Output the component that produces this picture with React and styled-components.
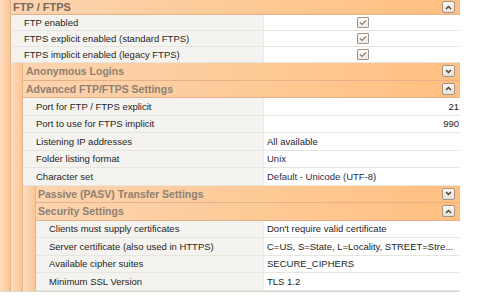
import React from 'react';
import styled, { createGlobalStyle } from 'styled-components';

const Global = createGlobalStyle`
  html, body { margin: 0; padding: 0; background: #fff; }
  body { font-family: "Liberation Sans", Arial, sans-serif; }
`;

const Grid = styled.div`
  width: 460px;
  border-bottom: 1px solid #d9d6cf;
`;

const Category = styled.div`
  display: flex;
`;

const Band = styled.div`
  flex: none;
  box-sizing: border-box;
  width: ${p => p.$w}px;
  background: linear-gradient(to right, #fddcc0, #fbc693);
  border-right: 1px solid #e8b48a;
`;

const Body = styled.div`
  flex: 1;
  min-width: 0;
  display: flex;
  flex-direction: column;
`;

const Header = styled.div`
  box-sizing: border-box;
  height: ${p => p.$h}px;
  display: flex;
  align-items: center;
  justify-content: space-between;
  padding: 0 5px 0 ${p => p.$pad}px;
  background: linear-gradient(to right, #fcd4b0, #fdca97 50%, #ffbf7f);
  border-bottom: 1px solid #e6b088;
  font-weight: bold;
  font-size: ${p => p.$fs}px;
  color: ${p => p.$color};
  white-space: nowrap;
`;

const Toggle = styled.div`
  box-sizing: border-box;
  width: 13px;
  height: 12px;
  flex: none;
  border: 1px solid #a3948a;
  border-radius: 2px;
  background: linear-gradient(#fbf8f4, #e8e0d5);
  display: flex;
  align-items: center;
  justify-content: center;
`;

const Row = styled.div`
  box-sizing: border-box;
  display: flex;
  height: ${p => p.$h}px;
  border-bottom: 1px solid #e7e5df;
`;

const Name = styled.div`
  flex: 1;
  min-width: 0;
  background: #f4f3f0;
  padding-left: 13px;
  display: flex;
  align-items: center;
  font-size: 9.5px;
  color: #1e1e1e;
  white-space: nowrap;
  overflow: hidden;
`;

const Value = styled.div`
  box-sizing: border-box;
  flex: none;
  width: 197px;
  background: #fff;
  border-left: 1px solid #eceae5;
  display: flex;
  align-items: center;
  justify-content: ${p => (p.$align === 'right' ? 'flex-end' : p.$align === 'center' ? 'center' : 'flex-start')};
  padding: 0 1px 0 3px;
  font-size: 9.5px;
  color: ${p => p.$color || '#1e1e1e'};
  white-space: nowrap;
  overflow: hidden;
`;

const Check = styled.div`
  box-sizing: border-box;
  width: 12px;
  height: 11px;
  border: 1px solid #a2948a;
  border-radius: 1px;
  background: linear-gradient(#fdfbf8, #efe9e1);
  display: flex;
  align-items: center;
  justify-content: center;
`;

const Chevron = ({ up }) => (
  <svg width="7" height="5" viewBox="0 0 7 5">
    <path
      d={up ? 'M1 4 L3.5 1.5 L6 4' : 'M1 1 L3.5 3.5 L6 1'}
      fill="none"
      stroke="#4b3f36"
      strokeWidth="1.4"
    />
  </svg>
);

const CheckMark = () => (
  <svg width="8" height="7" viewBox="0 0 8 7">
    <path d="M1 3.5 L3 5.5 L7 1.5" fill="none" stroke="#8d7e72" strokeWidth="1.2" />
  </svg>
);

const levels = [
  { band: 11, pad: 2, fs: 11, color: '#7a6959', h: 15 },
  { band: 12, pad: 3, fs: 10.5, color: '#8f8072', h: 17.5 },
  { band: 13, pad: 2, fs: 10.5, color: '#8f8072', h: 17.5 },
];

const data = {
  title: 'FTP / FTPS',
  open: true,
  children: [
    { name: 'FTP enabled', check: true, h: 16 },
    { name: 'FTPS explicit enabled (standard FTPS)', check: true, h: 16 },
    { name: 'FTPS implicit enabled (legacy FTPS)', check: true, h: 16 },
    { title: 'Anonymous Logins', open: false, children: [] },
    {
      title: 'Advanced FTP/FTPS Settings',
      open: true,
      children: [
        { name: 'Port for FTP / FTPS explicit', value: '21', align: 'right' },
        { name: 'Port to use for FTPS implicit', value: '990', align: 'right' },
        { name: 'Listening IP addresses', value: 'All available' },
        { name: 'Folder listing format', value: 'Unix', color: '#2b2b4a' },
        { name: 'Character set', value: 'Default - Unicode (UTF-8)', color: '#2b2b4a' },
        { title: 'Passive (PASV) Transfer Settings', open: false, children: [] },
        {
          title: 'Security Settings',
          open: true,
          children: [
            { name: 'Clients must supply certificates', value: "Don't require valid certificate" },
            { name: 'Server certificate (also used in HTTPS)', value: 'C=US, S=State, L=Locality, STREET=Stre...' },
            { name: 'Available cipher suites', value: 'SECURE_CIPHERS' },
            { name: 'Minimum SSL Version', value: 'TLS 1.2' },
          ],
        },
      ],
    },
  ],
};

function Item({ item }) {
  return (
    <Row $h={item.h || 17.5}>
      <Name>{item.name}</Name>
      <Value $align={item.check ? 'center' : item.align} $color={item.color}>
        {item.check ? (
          <Check>
            <CheckMark />
          </Check>
        ) : (
          item.value
        )}
      </Value>
    </Row>
  );
}

function Group({ group, level }) {
  const L = levels[level];
  return (
    <Category>
      <Band $w={L.band} />
      <Body>
        <Header $h={L.h} $pad={L.pad} $fs={L.fs} $color={L.color}>
          <span>{group.title}</span>
          <Toggle>
            <Chevron up={group.open} />
          </Toggle>
        </Header>
        {group.open &&
          group.children.map((c, i) =>
            c.title ? <Group key={i} group={c} level={level + 1} /> : <Item key={i} item={c} />
          )}
      </Body>
    </Category>
  );
}

export default function App() {
  return (
    <>
      <Global />
      <Grid>
        <Group group={data} level={0} />
      </Grid>
    </>
  );
}
